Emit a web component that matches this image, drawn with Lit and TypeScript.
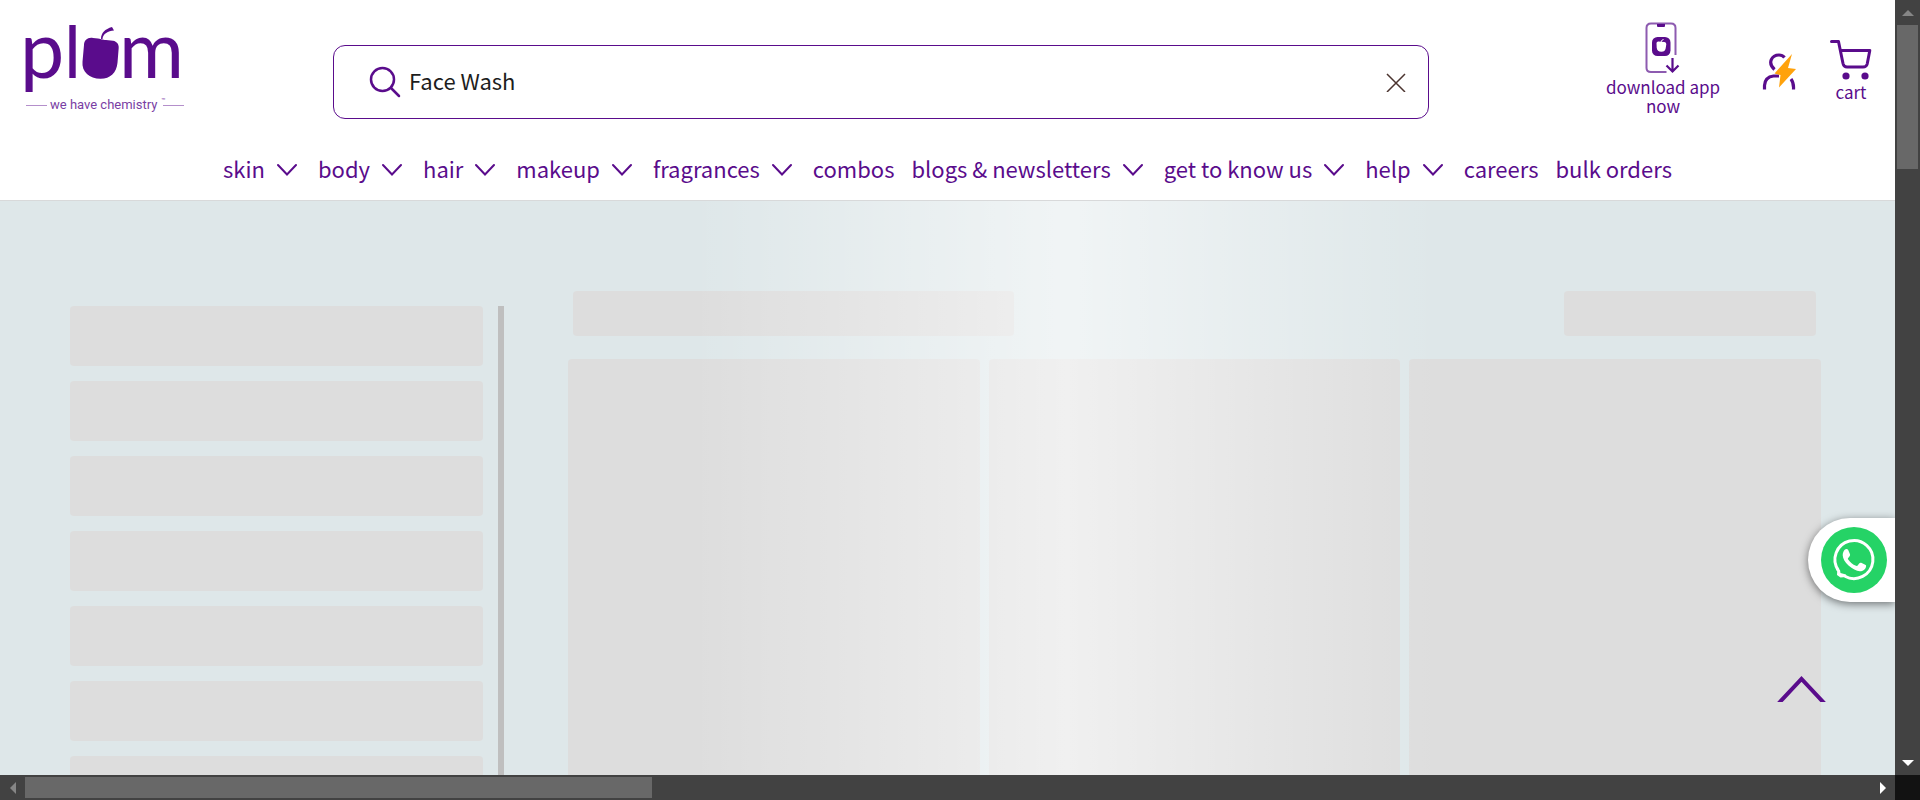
import { LitElement, html, svg, css, nothing } from "lit";
import { customElement, state } from "lit/decorators.js";

interface NavItem {
  label: string;
  menu: boolean;
}

const NAV: NavItem[] = [
  { label: "skin", menu: true },
  { label: "body", menu: true },
  { label: "hair", menu: true },
  { label: "makeup", menu: true },
  { label: "fragrances", menu: true },
  { label: "combos", menu: false },
  { label: "blogs & newsletters", menu: true },
  { label: "get to know us", menu: true },
  { label: "help", menu: true },
  { label: "careers", menu: false },
  { label: "bulk orders", menu: false },
];

const arrow = (points: string) =>
  html`<svg viewBox="0 0 12 12" width="12" height="12" aria-hidden="true">${svg`<polygon points=${points} fill="currentColor" />`}</svg>`;

@customElement("plum-header")
class PlumHeader extends LitElement {
  @state() private query = "Face Wash";

  static styles = css`
    :host {
      display: block;
      background: #fff;
      border-bottom: 1px solid #d8d9da;
      color: #5a0c8c;
    }
    a {
      color: inherit;
      text-decoration: none;
    }
    svg {
      display: block;
      flex: none;
    }
    .top {
      display: grid;
      grid-template-columns: 307px 1fr 466px;
      padding: 20px 0 0 26px;
      height: 120px;
      box-sizing: border-box;
    }
    .logo {
      overflow: visible;
    }
    .wordmark {
      font: 400 79px Lato, sans-serif;
    }
    .ascender {
      font-size: 72px;
    }
    .tagline {
      font: 400 13px Roboto, sans-serif;
    }
    .tm {
      font: 400 7px Roboto, sans-serif;
    }
    .search {
      display: flex;
      align-items: center;
      box-sizing: border-box;
      height: 74px;
      margin-top: 25px;
      padding: 0 22px 0 35px;
      border: 1px solid #5a0c8c;
      border-radius: 12px;
      background: #fff;
    }
    .field {
      flex: 1;
      min-width: 0;
      height: 40px;
      padding: 0 0 4px;
      margin-left: 8px;
      border: 0;
      outline: 0;
      background: none;
      color: #1d1d1d;
      font: inherit;
    }
    button {
      border: 0;
      padding: 0;
      background: none;
      color: inherit;
      cursor: pointer;
    }
    .actions {
      display: flex;
      justify-content: flex-end;
      padding-right: 20px;
      font-size: 17px;
      line-height: 19px;
      text-align: center;
    }
    .action {
      display: flex;
      flex-direction: column;
      align-items: center;
    }
    .download {
      width: 130px;
      padding-top: 2px;
      margin-right: 34px;
    }
    .account {
      padding-top: 32px;
      margin-right: 30px;
    }
    .cart {
      padding-top: 18px;
      width: 48px;
    }
    .download svg {
      margin-bottom: 3px;
    }
    .cart svg {
      margin-bottom: 2px;
    }
    .nav {
      display: flex;
      justify-content: center;
      align-items: flex-start;
      height: 80px;
      padding-top: 18px;
      box-sizing: border-box;
      gap: 17px;
      font-size: 22px;
      line-height: 60px;
    }
    .item {
      display: flex;
      align-items: center;
      gap: 12px;
      white-space: nowrap;
    }
    .item svg {
      margin: 4px 4px 0 0;
    }
    form {
      margin: 0;
    }
  `;

  render() {
    return html`
      <header>
        <div class="top">
          <a href="#" aria-label="plum home">
            <svg class="logo" width="160" height="100" viewBox="26 20 160 100">
              <g fill="#5a0c8c">
                <text class="wordmark" x="20" y="78">p</text>
                <text class="wordmark ascender" x="64" y="78">l</text>
                <path d="M84 45c0-5 4-8 9-7l5 .5c2 .3 3 .9 4 .9s2 .3 4 .6l7 .8c4 .5 6 4 5.700 7l-1.200 15c-1 10-7 16-17 16-11 0-19-7-18-17z" />
                <path d="M101 39c0-6 4-10 11-12l2 3.500c-6 .5-11 3-11.500 8.500z" />
                <text class="wordmark" x="119" y="78">m</text>
              </g>
              <g fill="#7a3ea4">
                <text class="tagline" x="50" y="109">we have chemistry</text>
                <text class="tm" x="161" y="103">™</text>
                <path d="M26 105h21v1H26zM163 105h21v1h-21z" fill="#b48fcb" />
              </g>
            </svg>
          </a>
          <form class="search" role="search" @submit=${(e: Event) => e.preventDefault()}>
            <button type="submit" aria-label="Search">
              <svg width="32" height="32" viewBox="0 0 32 32" fill="none" stroke="currentColor" stroke-width="2.500" stroke-linecap="round">
                <circle cx="13.500" cy="13.500" r="11.500" />
                <path d="M22 22l8 8" />
              </svg>
            </button>
            <input
              class="field"
              type="text"
              aria-label="Search products"
              .value=${this.query}
              @input=${(e: Event) => (this.query = (e.target as HTMLInputElement).value)}
            />
            <button type="button" aria-label="Clear search" @click=${() => (this.query = "")}>
              <svg width="20" height="20" viewBox="0 0 20 20" fill="none" stroke="#4b342f" stroke-width="1.500">
                <path d="M1 2l18 18M19 2L1 20" />
              </svg>
            </button>
          </form>
          <div class="actions">
            <a class="action download" href="#">
              <svg width="36" height="52" viewBox="0 0 36 52" fill="none">
                <path d="M30.500 33V6q0-4.500-4.500-4.500H6Q1.500 1.500 1.500 6v40q0 4 4.500 4h15.500" stroke="#8d5bb0" stroke-width="2" />
                <path d="M12 2h8v2q0 1-1 1h-6q-1 0-1-1z" fill="#5a0c8c" />
                <rect x="7" y="15" width="18.500" height="19" rx="5.500" fill="#5a0c8c" />
                <path d="M11.500 21q.2-1.800 2-1.600l2.500.3 3.500.3q2 .3 1.800 2.200l-.6 4q-.6 3.500-4.300 3.500-4.300 0-4.700-4z" fill="#fff" />
                <path d="M16 20q.2-2 2.500-2.500" stroke="#fff" />
                <path d="M27.500 36v13M21.500 43.500l6 6 6-6" stroke="#5a0c8c" stroke-width="2.200" />
              </svg>
              download app now
            </a>
            <a class="action account" href="#" aria-label="Account">
              <svg width="35" height="38" viewBox="0 0 35 38" fill="none">
                <g stroke="#5a0c8c" stroke-width="3.200" stroke-linecap="butt">
                  <path d="M12.500 17.500C5 10.500 10 3 17 3q3.500 0 5.500 2.500" />
                  <path d="M2.500 37.500v-4q.5-8.500 9-9.500h5.500M29 27q3 4 2.500 10.500" />
                </g>
                <path d="M30 2L12.500 21.500l6 1.500-1.500 12.500L34 17l-8-1z" fill="#ffa20c" />
              </svg>
            </a>
            <a class="action cart" href="#">
              <svg width="42" height="42" viewBox="0 0 42 42" fill="none" stroke="#5a0c8c" stroke-width="3" stroke-linejoin="round" stroke-linecap="round">
                <path d="M1.500 3.500h7l4.500 22q.8 3.500 4 3.500h16q3.500 0 4.200-3l2.600-13.500h-29" />
                <g fill="#5a0c8c" stroke="none">
                  <circle cx="16" cy="38" r="3.600" />
                  <circle cx="35" cy="38" r="3.600" />
                </g>
              </svg>
              cart
            </a>
          </div>
        </div>
        <nav class="nav">
          ${NAV.map(
            (item) => html`
              <a class="item" href="#"
                >${item.label}${item.menu
                  ? html`<svg width="20" height="14" viewBox="0 0 20 14" fill="none" stroke="currentColor" stroke-width="2" stroke-linecap="round">
                      <path d="M1 2l9 9.500 9-9.500" />
                    </svg>`
                  : nothing}</a
              >
            `
          )}
        </nav>
      </header>
    `;
  }
}

@customElement("product-skeleton")
class ProductSkeleton extends LitElement {
  static styles = css`
    :host {
      display: grid;
      grid-template-columns: 434fr 1253fr;
      gap: 64px;
      padding: 90px 74px 0 70px;
      box-sizing: border-box;
      position: relative;
      overflow: hidden;
      background: #dee7e9;
    }
    .filters {
      display: flex;
      gap: 15px;
      margin-top: 15px;
    }
    .rows {
      flex: 1;
      display: flex;
      flex-direction: column;
      gap: 15px;
    }
    .block {
      background: #ddd;
      border-radius: 4px;
    }
    .row {
      height: 60px;
      flex: none;
    }
    .divider {
      width: 6px;
      background: #bfbfbf;
    }
    .results {
      display: flex;
      flex-direction: column;
      gap: 23px;
    }
    .heading {
      display: flex;
      justify-content: space-between;
      height: 45px;
      padding: 0 5px;
    }
    .title {
      width: 35.500%;
    }
    .sort {
      width: 20.300%;
    }
    .cards {
      flex: 1;
      display: grid;
      grid-template-columns: repeat(3, 1fr);
      gap: 9px;
    }
    .card {
      min-height: 600px;
    }
    .shine {
      position: absolute;
      inset: 0;
      background: linear-gradient(
        90deg,
        rgba(255, 255, 255, 0) 36.500%,
        rgba(255, 255, 255, 0.56) 56.300%,
        rgba(255, 255, 255, 0) 76%
      );
    }
  `;

  render() {
    return html`
      <div class="filters">
        <div class="rows">${[1, 2, 3, 4, 5, 6, 7].map(() => html`<div class="block row"></div>`)}</div>
        <div class="divider"></div>
      </div>
      <div class="results">
        <div class="heading">
          <div class="block title"></div>
          <div class="block sort"></div>
        </div>
        <div class="cards">${[1, 2, 3].map(() => html`<div class="block card"></div>`)}</div>
      </div>
      <div class="shine"></div>
    `;
  }
}

@customElement("app-root")
class AppRoot extends LitElement {
  static styles = css`
    :host {
      display: grid;
      grid-template-columns: 1fr 25px;
      grid-template-rows: 1fr 25px;
      height: 100vh;
      overflow: hidden;
      background: #424242;
      font: 400 22px "Noto Sans CJK SC", "Noto Sans", sans-serif;
    }
    .page {
      position: relative;
      display: flex;
      flex-direction: column;
      min-width: 0;
      min-height: 0;
      overflow: hidden;
    }
    product-skeleton {
      flex: 1;
      min-height: 0;
    }
    .whatsapp {
      position: absolute;
      right: 0;
      bottom: 173px;
      display: flex;
      padding: 9px 8px 9px 13px;
      border-radius: 42px 0 0 42px;
      background: #fff;
      box-shadow: 0 2px 8px rgba(0, 0, 0, 0.5);
    }
    .to-top {
      position: absolute;
      right: 69px;
      bottom: 73px;
      padding: 0;
      border: 0;
      background: none;
      cursor: pointer;
    }
    svg {
      display: block;
    }
    .bar {
      display: flex;
      align-items: center;
      color: #fff;
    }
    .vertical {
      flex-direction: column;
    }
    .step {
      display: flex;
      align-items: center;
      justify-content: center;
      flex: none;
      width: 25px;
      height: 25px;
    }
    .dim {
      color: #868686;
    }
    .track {
      flex: 1;
      align-self: stretch;
      padding: 0 2px;
    }
    .horizontal .track {
      padding: 2px 0;
    }
    .thumb {
      height: 19.800%;
      background: #686868;
    }
    .horizontal .thumb {
      width: 34%;
      height: 21px;
    }
    .corner {
      background: #121212;
    }
  `;

  render() {
    return html`
      <main class="page">
        <plum-header></plum-header>
        <product-skeleton></product-skeleton>
        <a class="whatsapp" href="#" aria-label="Chat on WhatsApp">
          <svg width="66" height="66" viewBox="0 0 66 66">
            <circle cx="33" cy="33" r="33" fill="#25d366" />
            <path d="M17.400 43.400A19 19 0 1 1 23.900 49.200" fill="none" stroke="#fff" stroke-width="3" />
            <path d="M16.200 44.500L14.500 41.500 19 43 19.500 46 25 47.500 25.500 50 19.500 50.500 16 48z" fill="#fff" />
            <path
              d="M25 23.500c1.200-.8 2.500-.7 3.200.6l1.700 3.800c.4 1 .1 1.700-.5 2.500l-1.200 1.500c-.5.600-.4 1 0 1.600 2 3 4.500 5 7.800 6.300.7.200 1.100.1 1.600-.4l1.800-2.200c.5-.6 1.100-.7 1.800-.4l4 1.900c.7.300 1 .7.900 1.500-.5 3.200-3.200 5-6.200 5-3.500-.2-7.500-2-11.400-5.600-3.500-3.400-5.700-7-5.800-10.400 0-2.300.9-4.500 2.300-5.700z"
              transform="translate(-1 -1)"
              fill="#fff"
            />
          </svg>
        </a>
        <button class="to-top" type="button" aria-label="Back to top">
          <svg width="49" height="26" viewBox="0 0 49 26" fill="none" stroke="#5a0c8c" stroke-width="4">
            <path d="M1 28L24.500 3 48 28" />
          </svg>
        </button>
      </main>
      <div class="bar vertical">
        <div class="step dim">${arrow("0,9 6,3 12,9")}</div>
        <div class="track"><div class="thumb"></div></div>
        <div class="step">${arrow("0,3 12,3 6,9")}</div>
      </div>
      <div class="bar horizontal">
        <div class="step dim">${arrow("9,0 9,12 3,6")}</div>
        <div class="track"><div class="thumb"></div></div>
        <div class="step">${arrow("3,0 9,6 3,12")}</div>
      </div>
      <div class="corner"></div>
    `;
  }
}
